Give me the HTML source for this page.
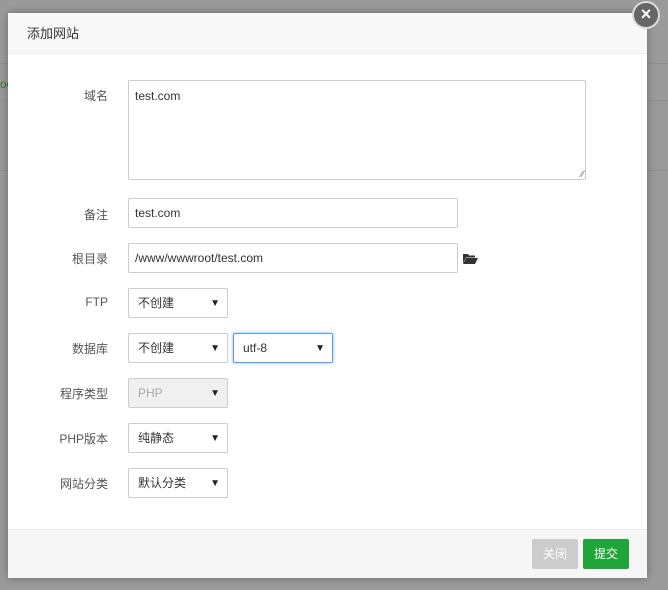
<!DOCTYPE html>
<html><head><meta charset="utf-8"><style>
*{box-sizing:border-box}
body{margin:0;width:668px;height:590px;background:#9a9a9a;font-family:"Liberation Sans","Noto Sans CJK SC",sans-serif;font-size:12px;color:#555;position:relative;overflow:hidden}
.bgl{position:absolute;left:0;right:0;height:1px;background:#8e8e8e}
.dlg{position:absolute;left:8px;top:13px;width:639px;height:565px;background:#fff;box-shadow:0 0 8px rgba(0,0,0,.3)}
.hd{height:41px;background:#f8f8f8;border-bottom:1px solid #eee;padding-left:19px;line-height:41px;font-size:13px;color:#333}
.lab{position:absolute;right:539px;text-align:right;color:#555;font-size:12px}
.in{position:absolute;left:120px;border:1px solid #ccc;border-radius:2px;background:#fff;padding-left:6px;color:#333;font-size:12px}
.sel{width:100px;height:30px;line-height:28px;padding-left:9px}
.sel:after{content:"▼";position:absolute;right:7px;top:1px;font-size:10px;line-height:28px;color:#222}
.ft{position:absolute;left:0;right:0;bottom:0;height:49px;background:#f5f6f5;border-top:1px solid #eee}
.btn{position:absolute;top:9px;height:30px;width:46px;line-height:30px;text-align:center;color:#fff;border-radius:2px;font-size:12px}
.x{position:absolute;width:28px;height:28px;border-radius:50%;background:#666;border:2px solid #ddd;color:#fff;text-align:center;line-height:23px;font-size:18px;font-weight:bold}
</style></head><body>
<div class="bgl" style="top:63px"></div>
<div class="bgl" style="top:100px"></div>
<div class="bgl" style="top:170px"></div>
<div style="position:absolute;left:0;top:77px;color:#2a7a2a;font-size:12px">oc</div>
<div class="dlg">
<div class="hd">添加网站</div>
<div class="lab" style="top:74px">域名</div>
<div class="in" style="top:67px;width:458px;height:100px;padding-top:8px">test.com<span style="position:absolute;right:1px;bottom:0;font-size:9px;color:#777">⁄⁄</span></div>
<div class="lab" style="top:193px">备注</div>
<div class="in" style="top:185px;width:330px;height:30px;line-height:28px">test.com</div>
<div class="lab" style="top:237px">根目录</div>
<div class="in" style="top:230px;width:330px;height:30px;line-height:28px">/www/wwwroot/test.com</div>
<svg style="position:absolute;left:455px;top:240px" width="15" height="11" viewBox="0 0 15 11"><path d="M0 1h5l1 1.5h6v2H3L0 10z" fill="#333"/><path d="M3 5h12l-3 6H0z" fill="#333"/></svg>
<div class="lab" style="top:282px">FTP</div>
<div class="in sel" style="top:275px">不创建</div>
<div class="lab" style="top:327px">数据库</div>
<div class="in sel" style="top:320px">不创建</div>
<div class="in sel" style="top:320px;left:225px;border-color:#5b9bea;box-shadow:0 0 3px #8ab8f0">utf-8</div>
<div class="lab" style="top:372px">程序类型</div>
<div class="in sel" style="top:365px;background:#f0f0f0;color:#aaa">PHP</div>
<div class="lab" style="top:417px">PHP版本</div>
<div class="in sel" style="top:410px">纯静态</div>
<div class="lab" style="top:462px">网站分类</div>
<div class="in sel" style="top:455px">默认分类</div>
<div class="ft">
<div class="btn" style="left:524px;background:#ccc">关闭</div>
<div class="btn" style="left:575px;background:#20a53a">提交</div>
</div>
</div>
<div class="x" style="left:632px;top:1px">×</div>
</body></html>
